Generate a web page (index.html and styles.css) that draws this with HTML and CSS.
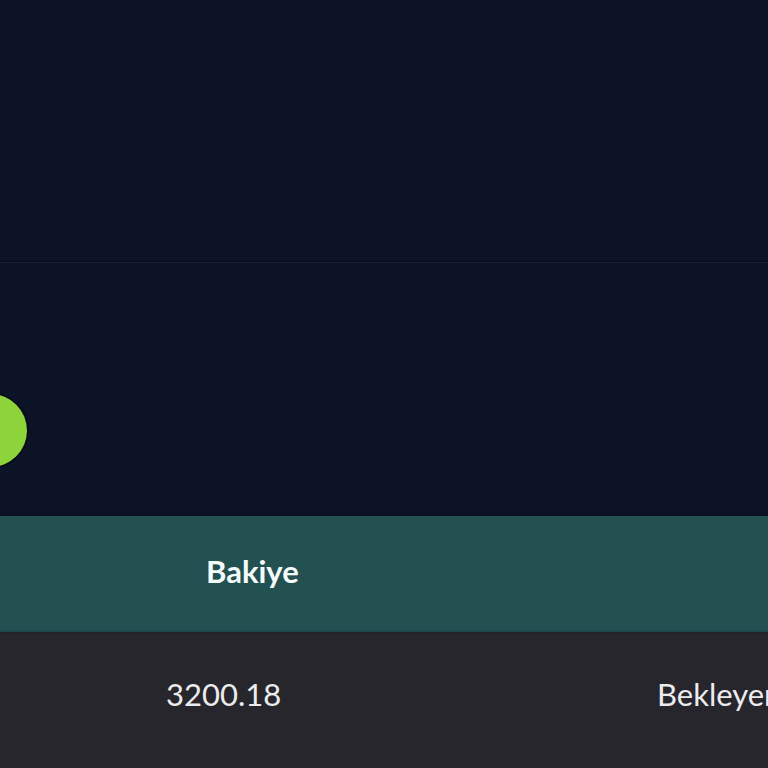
FILE: index.html
```html
<!DOCTYPE html>
<html lang="tr">
<head>
<meta charset="utf-8">
<title>Bakiye</title>
<link rel="stylesheet" href="styles.css">
</head>
<body>
<div class="page">
  <section class="chart">
    <div class="grid-top"></div>
    <div class="gridline"></div>
    <div class="grid-bottom"></div>
    <span class="dot"></span>
  </section>
  <div class="table">
    <div class="row head">
      <div class="cell first">Bakiye</div>
      <div class="cell"></div>
    </div>
    <div class="row body">
      <div class="cell first">3200.18</div>
      <div class="cell">Bekleyen</div>
    </div>
  </div>
</div>
</body>
</html>
```

FILE: styles.css
```css
html, body {
  margin: 0;
  padding: 0;
  background: #0d1326;
  overflow: hidden;
}
.page {
  width: 768px;
  height: 768px;
  overflow: hidden;
  font-family: "Lato", "Noto Sans", sans-serif;
}
.chart {
  position: relative;
  height: 516px;
  display: flex;
  flex-direction: column;
  background: #0d1326;
}
.grid-top {
  height: 261px;
}
.gridline {
  height: 1px;
  background: #070c1c;
  border-bottom: 1px solid #1b2134;
}
.grid-bottom {
  flex: 1;
  border-bottom: 1px solid #070c1a;
}
.dot {
  position: absolute;
  left: -46px;
  top: 394px;
  width: 73px;
  height: 73px;
  border-radius: 50%;
  background: #8cd43a;
  box-shadow: 0 0 0 2px rgba(0, 0, 0, 0.35);
}
.table {
  display: flex;
  flex-direction: column;
}
.row {
  display: grid;
  grid-template-columns: 657px 1fr;
  align-items: center;
  white-space: nowrap;
}
.head {
  height: 116px;
  background: #235050;
  border-top: 1px solid #2b5757;
  border-bottom: 2px solid #1d4a4c;
  box-sizing: border-box;
  color: #f4fbfb;
  font-weight: 700;
  font-size: 31px;
}
.head .first {
  padding-left: 206px;
  padding-bottom: 6px;
}
.body {
  height: 136px;
  background: #27262c;
  border-top: 2px solid #1f2228;
  box-sizing: border-box;
  color: #ececee;
  font-weight: 400;
  font-size: 31px;
  align-items: start;
}
.body .cell {
  padding-top: 41px;
}
.body .first {
  padding-left: 166px;
}
```
